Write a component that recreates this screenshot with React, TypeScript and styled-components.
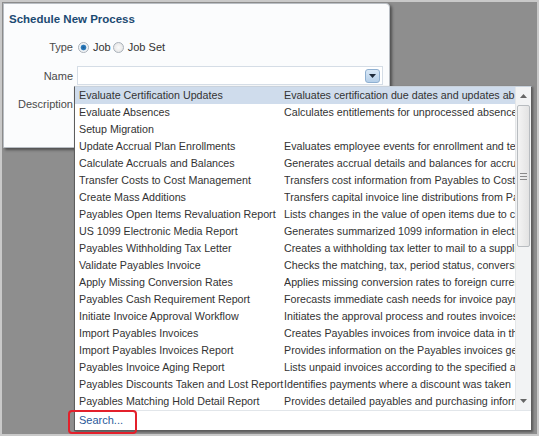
import React from "react";
import styled, { createGlobalStyle } from "styled-components";

const GlobalStyle = createGlobalStyle`
  html, body { margin: 0; padding: 0; }
  body { font-family: "Liberation Sans", Arial, sans-serif; background: #8e8e8e; }
`;

const Stage = styled.div`
  position: relative;
  box-sizing: border-box;
  width: 539px;
  height: 436px;
  background: #8e8e8e;
  border: 2px solid #c9c9c9;
  padding: 1px;
  overflow: hidden;
`;

const Dialog = styled.div`
  box-sizing: border-box;
  width: 387px;
  height: 145px;
  background: #fbfcfd;
  border: 1px solid #b9bec4;
  border-radius: 0 4px 0 0;
  box-shadow: 2px 2px 3px rgba(0, 0, 0, 0.45);
  padding: 8px 0 0 5px;
`;

const Title = styled.div`
  font-size: 11.5px;
  font-weight: bold;
  color: #1c4a72;
  line-height: 14px;
`;

const Form = styled.div`
  display: grid;
  grid-template-columns: 64px 1fr;
  column-gap: 4px;
  row-gap: 10px;
  margin-top: 12px;
  align-items: center;
`;

const Label = styled.div`
  text-align: right;
  font-size: 11px;
  color: #4a4a4a;
  line-height: 18px;
`;

const RadioGroup = styled.div`
  display: flex;
  align-items: center;
  font-size: 11px;
  color: #333;
  height: 18px;
  padding-left: 1px;
`;

const Radio = styled.span<{ $checked?: boolean }>`
  box-sizing: border-box;
  display: inline-block;
  width: 11px;
  height: 11px;
  border-radius: 50%;
  border: 1px solid #a9b1ba;
  background: ${(p) =>
    p.$checked
      ? "radial-gradient(circle, #1a5d97 0, #2f7fc0 2.5px, #e9eef3 3.2px, #fdfdfd 5px)"
      : "radial-gradient(circle, #fafafa 0, #e6e6e6 5px)"};
  margin-right: 4px;
`;

const RadioText = styled.span`
  margin-right: 2px;
`;

const NameInput = styled.div`
  box-sizing: border-box;
  width: 306px;
  height: 19px;
  border: 1px solid #d5dde6;
  background: #fff;
  display: flex;
  justify-content: flex-end;
  align-items: center;
  padding-right: 2px;
`;

const DropButton = styled.span`
  box-sizing: border-box;
  width: 15px;
  height: 14px;
  border: 1px solid #8fb0d1;
  border-radius: 3px;
  background: linear-gradient(#d9e8f6, #b5cfe9);
  display: flex;
  align-items: center;
  justify-content: center;
`;

const Popup = styled.div`
  position: absolute;
  left: 72px;
  top: 84px;
  box-sizing: border-box;
  width: 458px;
  height: 345px;
  background: #fff;
  border: 1px solid #5d5d5d;
  border-top-color: #c9d2dc;
  box-shadow: 1px 1px 2px rgba(0, 0, 0, 0.4);
  display: flex;
  flex-direction: column;
`;

const ListArea = styled.div`
  display: flex;
  border-bottom: 1px solid #e2e6ea;
`;

const Rows = styled.div`
  flex: 1;
  min-width: 0;
`;

const Row = styled.div<{ $active?: boolean }>`
  display: grid;
  grid-template-columns: 205px 1fr;
  height: 17px;
  line-height: 17px;
  font-size: 10.7px;
  color: #333;
  padding-left: 4px;
  background: ${(p) => (p.$active ? "#cfdcec" : "transparent")};
  white-space: nowrap;
`;

const Cell = styled.span`
  overflow: hidden;
`;

const FirstCell = styled.span`
  overflow: visible;
`;

const Scrollbar = styled.div`
  width: 15px;
  background: #f2f3f4;
  border-left: 1px solid #e4e6e8;
  display: flex;
  flex-direction: column;
  align-items: center;
  padding: 1px 0;
`;

const Arrow = styled.div`
  height: 16px;
  display: flex;
  align-items: center;
  justify-content: center;
`;

const Track = styled.div`
  flex: 1;
  width: 100%;
  display: flex;
  flex-direction: column;
`;

const Thumb = styled.div`
  margin: 1px 1px 0;
  height: 142px;
  box-sizing: border-box;
  border: 1px solid #b8bcc0;
  border-radius: 2px;
  background: linear-gradient(90deg, #f4f4f4, #e3e3e3);
  display: flex;
  align-items: center;
  justify-content: center;
`;

const SearchRow = styled.div`
  position: relative;
  height: 19px;
  line-height: 19px;
  padding-left: 4px;
  font-size: 11px;
  color: #2a5a9a;
`;

const Highlight = styled.div`
  position: absolute;
  left: -7px;
  top: -1px;
  width: 65px;
  height: 20px;
  border: 2px solid #e3202b;
  border-radius: 4px;
`;

const rows: [string, string][] = [
  ["Evaluate Certification Updates", "Evaluates certification due dates and updates ab"],
  ["Evaluate Absences", "Calculates entitlements for unprocessed absences"],
  ["Setup Migration", ""],
  ["Update Accrual Plan Enrollments", "Evaluates employee events for enrollment and termination"],
  ["Calculate Accruals and Balances", "Generates accrual details and balances for accrual plans"],
  ["Transfer Costs to Cost Management", "Transfers cost information from Payables to Cost Management"],
  ["Create Mass Additions", "Transfers capital invoice line distributions from Payables"],
  ["Payables Open Items Revaluation Report", "Lists changes in the value of open items due to currency"],
  ["US 1099 Electronic Media Report", "Generates summarized 1099 information in electronic"],
  ["Payables Withholding Tax Letter", "Creates a withholding tax letter to mail to a supplier"],
  ["Validate Payables Invoice", "Checks the matching, tax, period status, conversion"],
  ["Apply Missing Conversion Rates", "Applies missing conversion rates to foreign currency"],
  ["Payables Cash Requirement Report", "Forecasts immediate cash needs for invoice payments"],
  ["Initiate Invoice Approval Workflow", "Initiates the approval process and routes invoices"],
  ["Import Payables Invoices", "Creates Payables invoices from invoice data in the"],
  ["Import Payables Invoices Report", "Provides information on the Payables invoices generated"],
  ["Payables Invoice Aging Report", "Lists unpaid invoices according to the specified aging"],
  ["Payables Discounts Taken and Lost Report", "Identifies payments where a discount was taken"],
  ["Payables Matching Hold Detail Report", "Provides detailed payables and purchasing information"],
];

const Tri = ({ up, color = "#555" }: { up?: boolean; color?: string }) => (
  <svg width="7" height="4" viewBox="0 0 7 4">
    <polygon points={up ? "0,4 7,4 3.5,0" : "0,0 7,0 3.5,4"} fill={color} />
  </svg>
);

const Grip = () => (
  <svg width="7" height="7" viewBox="0 0 7 7">
    <rect x="0" y="0" width="7" height="1" fill="#8a8a8a" />
    <rect x="0" y="3" width="7" height="1" fill="#8a8a8a" />
    <rect x="0" y="6" width="7" height="1" fill="#8a8a8a" />
  </svg>
);

export default function App() {
  return (
    <>
      <GlobalStyle />
      <Stage>
        <Dialog>
          <Title>Schedule New Process</Title>
          <Form>
            <Label>Type</Label>
            <RadioGroup>
              <Radio $checked />
              <RadioText>Job</RadioText>
              <Radio />
              <RadioText>Job Set</RadioText>
            </RadioGroup>
            <Label>Name</Label>
            <NameInput>
              <DropButton>
                <Tri color="#1d2a3a" />
              </DropButton>
            </NameInput>
            <Label>Description</Label>
            <div />
          </Form>
        </Dialog>
        <Popup>
          <ListArea>
            <Rows>
              {rows.map(([name, desc], i) => (
                <Row key={name} $active={i === 0}>
                  <FirstCell>{name}</FirstCell>
                  <Cell>{desc}</Cell>
                </Row>
              ))}
            </Rows>
            <Scrollbar>
              <Arrow>
                <Tri up color="#666" />
              </Arrow>
              <Track>
                <Thumb>
                  <Grip />
                </Thumb>
              </Track>
              <Arrow>
                <Tri color="#666" />
              </Arrow>
            </Scrollbar>
          </ListArea>
          <SearchRow>
            Search...
            <Highlight />
          </SearchRow>
        </Popup>
      </Stage>
    </>
  );
}
